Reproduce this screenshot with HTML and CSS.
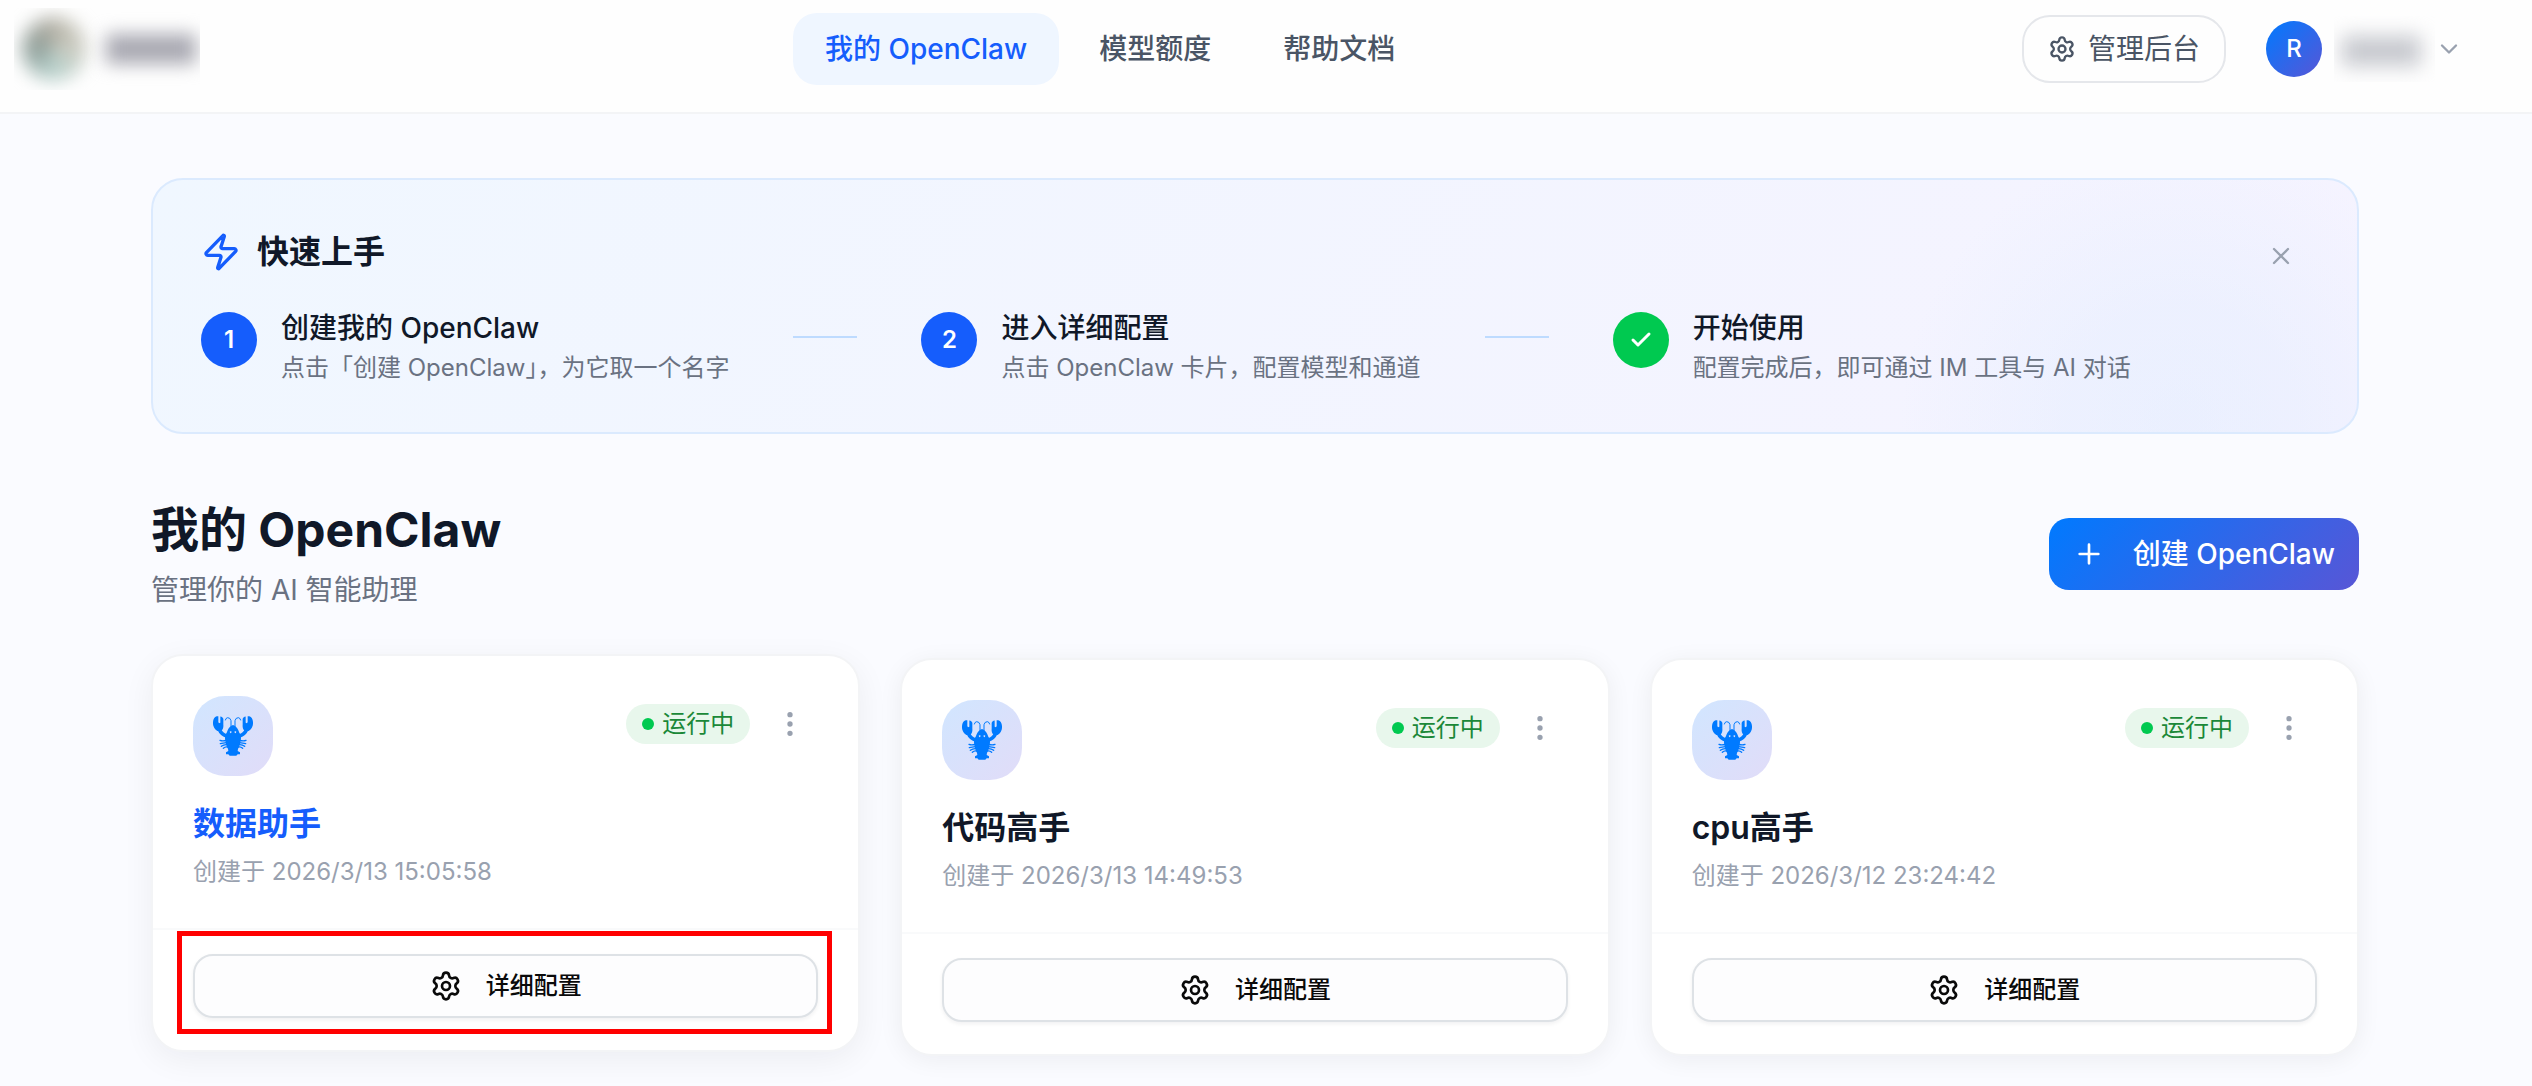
FILE: index.html
```html
<!DOCTYPE html>
<html lang="zh-CN">
<head>
<meta charset="utf-8">
<meta name="viewport" content="width=device-width, initial-scale=1">
<title>我的 OpenClaw</title>
<link rel="stylesheet" href="styles.css">
</head>
<body>
<svg class="sprite" aria-hidden="true">
  <symbol id="gear" viewBox="0 0 24 24"><path d="M9.671 4.136a2.34 2.34 0 0 1 4.659 0 2.34 2.34 0 0 0 3.319 1.915 2.34 2.34 0 0 1 2.33 4.033 2.34 2.34 0 0 0 0 3.831 2.34 2.34 0 0 1-2.33 4.033 2.34 2.34 0 0 0-3.319 1.915 2.34 2.34 0 0 1-4.659 0 2.34 2.34 0 0 0-3.32-1.915 2.34 2.34 0 0 1-2.33-4.033 2.34 2.34 0 0 0 0-3.831A2.34 2.34 0 0 1 6.35 6.051a2.34 2.34 0 0 0 3.319-1.915"/><circle cx="12" cy="12" r="3"/></symbol>
  <symbol id="dots" viewBox="0 0 24 24"><circle cx="12" cy="12" r="1"/><circle cx="12" cy="5" r="1"/><circle cx="12" cy="19" r="1"/></symbol>
  <symbol id="lobster" viewBox="69 78 120 120">
    <g fill="currentColor" stroke="none">
      <path d="M80 79 C70 82 67 96 70 107 C73 117 80 124 88 124 C98 124 101 112 100 104 L100 86 C97 81 93 79 91 80 L91 98 L87 100 L85 96 L85 79 Z"/>
      <path d="M178 79 C188 82 191 96 188 107 C185 117 178 124 170 124 C160 124 157 112 158 104 L158 86 C161 81 165 79 167 80 L167 98 L171 100 L173 96 L173 79 Z"/>
      <path fill-rule="evenodd" d="M129 105 C136 106 142 114 145 121 L148 128 L153 136 C154 152 150 166 144 177 L143 183 L150 187 L150 193 L143 193 L139 197 L119 197 L115 193 L108 193 L108 187 L115 183 L114 177 C108 166 104 152 105 136 L110 128 L113 121 C116 114 122 106 129 105 Z M122 124 a2.5 2.5 0 1 0 .1 0 Z M136 124 a2.5 2.5 0 1 0 .1 0 Z"/>
    </g>
    <g fill="none" stroke="currentColor" stroke-linecap="round">
      <path stroke-width="11" d="M88 118 Q94 133 110 138 M170 118 Q164 133 148 138"/>
      <path stroke-width="3" d="M123 112 L123 92 Q121 83 113 83 Q107 84 106 90 M135 112 L135 92 Q137 83 145 83 Q151 84 152 90"/>
      <path stroke-width="4" d="M108 151 Q98 154 90 151 M109 158 Q99 159 91 161 M111 164 Q102 163 94 169 M113 171 Q106 169 100 175 M150 151 Q160 154 168 151 M149 158 Q159 159 167 161 M147 164 Q156 163 164 169 M145 171 Q152 169 158 175"/>
    </g>
  </symbol>
</svg>

<header class="topbar">
  <div class="brand" aria-hidden="true"><span class="brand-mark"></span><span class="brand-name"></span></div>
  <nav class="nav">
    <a class="nav-link active" href="#">我的 OpenClaw</a>
    <a class="nav-link" href="#">模型额度</a>
    <a class="nav-link" href="#">帮助文档</a>
  </nav>
  <div class="account">
    <button class="admin" type="button"><svg class="icon icon-sm"><use href="#gear"/></svg>管理后台</button>
    <button class="user" type="button" aria-label="账户">
      <span class="avatar">R</span>
      <span class="user-name"></span>
      <svg class="icon icon-sm" viewBox="0 0 24 24"><path d="m6 9 6 6 6-6"/></svg>
    </button>
  </div>
</header>

<main class="page">
  <section class="guide">
    <div class="guide-head">
      <h2 class="guide-title"><svg class="icon icon-lg" viewBox="0 0 24 24"><path d="M4 14a1 1 0 0 1-.78-1.63l9.9-10.2a.5.5 0 0 1 .86.46l-1.92 6.02A1 1 0 0 0 13 10h7a1 1 0 0 1 .78 1.63l-9.9 10.2a.5.5 0 0 1-.86-.46l1.92-6.02A1 1 0 0 0 11 14z"/></svg>快速上手</h2>
      <button class="square-btn" type="button" aria-label="关闭"><svg class="icon icon-sm" viewBox="0 0 24 24"><path d="M18 6 6 18M6 6l12 12"/></svg></button>
    </div>
    <ol class="steps">
      <li class="step"><span class="step-num">1</span><div><h3 class="step-title">创建我的 OpenClaw</h3><p class="step-text">点击「创建 OpenClaw」，为它取一个名字</p></div></li>
      <li class="step-line" aria-hidden="true"></li>
      <li class="step"><span class="step-num">2</span><div><h3 class="step-title">进入详细配置</h3><p class="step-text">点击 OpenClaw 卡片，配置模型和通道</p></div></li>
      <li class="step-line" aria-hidden="true"></li>
      <li class="step"><span class="step-num done"><svg class="icon icon-check" viewBox="0 0 24 24"><path d="M20 6 9 17l-5-5"/></svg></span><div><h3 class="step-title">开始使用</h3><p class="step-text">配置完成后，即可通过 IM 工具与 AI 对话</p></div></li>
    </ol>
  </section>

  <section class="intro">
    <div>
      <h1 class="intro-title">我的 OpenClaw</h1>
      <p class="intro-text">管理你的 AI 智能助理</p>
    </div>
    <button class="create" type="button"><svg class="icon" viewBox="0 0 24 24"><path d="M5 12h14M12 5v14"/></svg>创建 OpenClaw</button>
  </section>

  <section class="cards">
    <article class="card hovered">
      <div class="card-body">
        <div class="card-top">
          <span class="tile"><svg class="lobster"><use href="#lobster"/></svg></span>
          <span class="status">运行中</span>
          <button class="square-btn" type="button" aria-label="更多"><svg class="icon"><use href="#dots"/></svg></button>
        </div>
        <h3 class="card-title">数据助手</h3>
        <p class="card-date">创建于 2026/3/13 15:05:58</p>
      </div>
      <div class="card-foot"><button class="config" type="button"><svg class="icon"><use href="#gear"/></svg>详细配置</button><span class="highlight"></span></div>
    </article>
    <article class="card">
      <div class="card-body">
        <div class="card-top">
          <span class="tile"><svg class="lobster"><use href="#lobster"/></svg></span>
          <span class="status">运行中</span>
          <button class="square-btn" type="button" aria-label="更多"><svg class="icon"><use href="#dots"/></svg></button>
        </div>
        <h3 class="card-title">代码高手</h3>
        <p class="card-date">创建于 2026/3/13 14:49:53</p>
      </div>
      <div class="card-foot"><button class="config" type="button"><svg class="icon"><use href="#gear"/></svg>详细配置</button></div>
    </article>
    <article class="card">
      <div class="card-body">
        <div class="card-top">
          <span class="tile"><svg class="lobster"><use href="#lobster"/></svg></span>
          <span class="status">运行中</span>
          <button class="square-btn" type="button" aria-label="更多"><svg class="icon"><use href="#dots"/></svg></button>
        </div>
        <h3 class="card-title">cpu高手</h3>
        <p class="card-date">创建于 2026/3/12 23:24:42</p>
      </div>
      <div class="card-foot"><button class="config" type="button"><svg class="icon"><use href="#gear"/></svg>详细配置</button></div>
    </article>
  </section>
</main>
</body>
</html>
```
FILE: styles.css
```css
* { box-sizing: border-box; }

body {
  margin: 0;
  background: #fafbff;
  color: #101828;
  font-family: Inter, "Noto Sans CJK SC", sans-serif;
  font-size: 28px;
  line-height: 40px;
}

h1, h2, h3, p, ol { margin: 0; padding: 0; }
button { font: inherit; color: inherit; border: 0; background: none; padding: 0; cursor: pointer; }
.sprite { position: absolute; width: 0; height: 0; }

.icon {
  width: 32px;
  height: 32px;
  flex: none;
  fill: none;
  stroke: currentColor;
  stroke-width: 2;
  stroke-linecap: round;
  stroke-linejoin: round;
}
.icon-sm { width: 28px; height: 28px; }
.icon-lg { width: 40px; height: 40px; color: #155dfc; }
.icon-check { width: 24px; height: 24px; stroke-width: 3; }

/* Top bar */
.topbar {
  display: grid;
  grid-template-columns: 779px auto 1fr;
  align-items: center;
  padding: 8px 69px 22px 14px;
  background: #fefefe;
  border-bottom: 2px solid #f3f4f6;
}
.brand { display: flex; align-items: center; gap: 20px; width: 186px; height: 82px; padding-left: 8px; overflow: hidden; }
.brand-mark {
  width: 64px;
  height: 64px;
  border-radius: 50%;
  background: conic-gradient(#b9b7ab, #ccccc2 90deg, #b9d3ce 180deg, #8f9f9a 270deg, #b0aca2);
  filter: blur(9px);
}
.brand-name { width: 90px; height: 30px; background: #a9a9b2; filter: blur(9px); }
.nav { display: flex; gap: 8px; font-weight: 500; }
.nav-link { padding: 16px 32px; border-radius: 24px; color: #4a5565; text-decoration: none; white-space: nowrap; }
.nav-link.active { background: #eff6ff; color: #155dfc; }
.account { display: flex; justify-content: flex-end; align-items: center; gap: 40px; color: #4a5565; }
.admin {
  display: flex;
  align-items: center;
  gap: 12px;
  padding: 12px 24px;
  border: 2px solid #e5e7eb;
  border-radius: 28px;
  white-space: nowrap;
}
.user { display: flex; align-items: center; color: #99a1af; }
.avatar {
  width: 56px;
  border-radius: 50%;
  background: linear-gradient(135deg, #007aff, #5856d6);
  color: #fff;
  font-size: 24px;
  font-weight: 500;
  line-height: 56px;
}
.user-name { width: 101px; height: 66px; margin-left: 12px; padding: 20px 14px 16px 8px; overflow: hidden; }
.user-name::before { content: ""; display: block; height: 30px; background: #c6c8ce; filter: blur(10px); }

/* Content */
.page { display: flex; flex-direction: column; padding: 64px 173px 30px 151px; }

.guide {
  padding: 48px;
  border: 2px solid #dbeafe;
  border-radius: 32px;
  background:
    radial-gradient(circle at 92% 96%, rgba(219, 234, 254, 0.4) 0, rgba(219, 234, 254, 0.3) 120px, rgba(219, 234, 254, 0) 280px),
    linear-gradient(120deg, #f0f7ff, #f5f3ff);
}
.guide-head { display: flex; justify-content: space-between; align-items: flex-start; margin-bottom: 24px; }
.guide-title { display: flex; align-items: center; gap: 16px; font-size: 32px; font-weight: 600; line-height: 48px; }
.square-btn { display: grid; place-items: center; width: 56px; height: 56px; color: #99a1af; }
.steps { display: flex; gap: 64px; list-style: none; }
.step { display: flex; gap: 24px; white-space: nowrap; }
.step-num {
  display: grid;
  place-items: center;
  width: 56px;
  height: 56px;
  margin-top: 4px;
  border-radius: 50%;
  background: #155dfc;
  color: #fff;
  font-size: 24px;
  font-weight: 600;
}
.step-num.done { background: #00c950; }
.step-title { font-size: 28px; font-weight: 500; }
.step-text { margin-top: 4px; color: #6a7282; font-size: 24px; line-height: 32px; }
.step-line { width: 64px; height: 2px; margin-top: 28px; background: #bedbff; }

.intro { display: flex; justify-content: space-between; align-items: center; margin: 64px 0 48px; }
.intro-title { font-size: 48px; font-weight: 700; line-height: 64px; }
.intro-text { margin-top: 8px; color: #6a7282; }
.create {
  display: flex;
  align-items: center;
  gap: 28px;
  padding: 16px 24px;
  border-radius: 20px;
  background: linear-gradient(135deg, #007aff, #5856d6);
  color: #fff;
  font-weight: 500;
}

/* Cards */
.cards { display: grid; grid-template-columns: repeat(3, 1fr); gap: 40px; }
.card {
  border: 2px solid #f3f4f6;
  border-radius: 32px;
  background: #fff;
  box-shadow: 0 4px 24px rgba(16, 24, 40, 0.06);
}
.card.hovered { transform: translateY(-4px); box-shadow: 0 8px 32px rgba(16, 24, 40, 0.06); }
.card.hovered .card-title { color: #155dfc; }
.card-body { padding: 40px; }
.card-top { display: flex; align-items: flex-start; height: 80px; margin-bottom: 24px; }
.tile {
  display: grid;
  place-items: center;
  width: 80px;
  height: 80px;
  margin-right: auto;
  border-radius: 32px;
  background: linear-gradient(135deg, #d1e6ff, #e1dcf8);
}
.lobster { width: 40px; height: 40px; color: #007aff; }
.status {
  display: flex;
  align-items: center;
  gap: 8px;
  margin: 8px 12px 0 0;
  padding: 0 16px;
  border-radius: 20px;
  background: #e8f7ec;
  color: #1b8838;
  font-size: 24px;
}
.status::before { content: ""; width: 12px; height: 12px; border-radius: 50%; background: #00c950; }
.card-title { font-size: 32px; font-weight: 600; line-height: 48px; }
.card-date { margin-top: 8px; color: #99a1af; font-size: 24px; line-height: 32px; }
.card-foot { position: relative; padding: 24px 40px 32px; border-top: 2px solid #f9fafb; }
.config {
  display: flex;
  align-items: center;
  justify-content: center;
  gap: 24px;
  width: 100%;
  height: 64px;
  border: 2px solid #dee2e6;
  border-radius: 20px;
  background: #fdfdfe;
  box-shadow: 0 2px 4px rgba(16, 24, 40, 0.06);
  color: #0a0a0a;
  font-size: 24px;
  font-weight: 500;
}
.highlight { position: absolute; inset: 1px 26px 16px 24px; border: 5px solid #ff0000; pointer-events: none; }
```
